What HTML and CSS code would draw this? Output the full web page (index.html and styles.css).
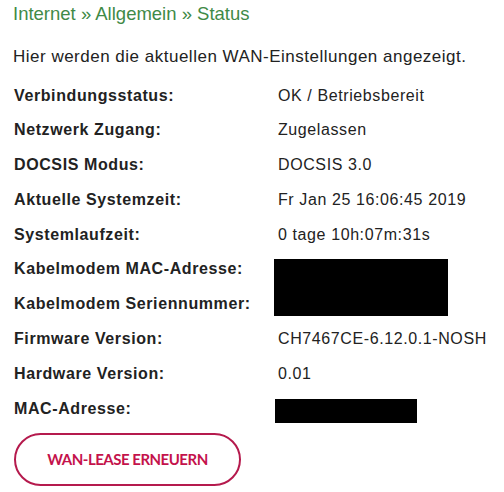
FILE: index.html
```html
<!DOCTYPE html>
<html lang="de">
<head>
<meta charset="utf-8">
<title>Status</title>
<link rel="stylesheet" href="styles.css">
</head>
<body>
<main class="page">
  <h1 class="crumbs">Internet » Allgemein » Status</h1>
  <p class="intro">Hier werden die aktuellen WAN-Einstellungen angezeigt.</p>
  <dl class="status">
    <dt>Verbindungsstatus:</dt><dd>OK / Betriebsbereit</dd>
    <dt>Netzwerk Zugang:</dt><dd>Zugelassen</dd>
    <dt>DOCSIS Modus:</dt><dd>DOCSIS 3.0</dd>
    <dt>Aktuelle Systemzeit:</dt><dd>Fr Jan 25 16:06:45 2019</dd>
    <dt>Systemlaufzeit:</dt><dd>0 tage 10h:07m:31s</dd>
    <dt>Kabelmodem MAC-Adresse:</dt><dd class="redacted redacted-tall"><span class="bar"></span></dd>
    <dt>Kabelmodem Seriennummer:</dt>
    <dt>Firmware Version:</dt><dd>CH7467CE-6.12.0.1-NOSH</dd>
    <dt>Hardware Version:</dt><dd>0.01</dd>
    <dt>MAC-Adresse:</dt><dd class="redacted redacted-short"><span class="bar"></span></dd>
  </dl>
  <button class="btn" type="button">WAN-LEASE ERNEUERN</button>
</main>
</body>
</html>
```
FILE: styles.css
```css
html, body {
  margin: 0;
  padding: 0;
  background: #ffffff;
}
.page {
  padding: 2px 0 0 13px;
  font-family: "Liberation Sans", Arial, sans-serif;
  color: #222222;
}
.crumbs {
  margin: 0;
  font-size: 18.5px;
  line-height: 24px;
  font-weight: normal;
  color: #3f8a47;
}
.intro {
  margin: 21px 0 0 0;
  font-size: 17px;
  line-height: 20px;
  letter-spacing: 0.5px;
}
.status {
  margin: 11.5px 0 0 1px;
  display: grid;
  grid-template-columns: 264px 1fr;
  grid-auto-rows: 34.8px;
  font-size: 16px;
  line-height: 34.8px;
  letter-spacing: 0.6px;
}
.status dt {
  grid-column: 1;
  font-weight: bold;
}
.status dd {
  grid-column: 2;
  margin: 0;
}
.redacted {
  display: flex;
  align-items: flex-start;
}
.redacted-tall {
  grid-row: span 2;
}
.bar {
  display: block;
  background: #000000;
  margin-left: -4px;
}
.redacted-tall .bar {
  width: 174px;
  height: 57px;
  margin-top: 6.5px;
}
.redacted-short .bar {
  width: 142px;
  height: 24px;
  margin-top: 7.5px;
  margin-left: -3px;
}
.btn {
  display: block;
  margin: 6.5px 0 0 1px;
  width: 227px;
  height: 53px;
  border: 2px solid #b51a4d;
  border-radius: 27px;
  background: #ffffff;
  color: #c4124b;
  font-family: Lato, "Liberation Sans", sans-serif;
  font-weight: bold;
  font-size: 15px;
  letter-spacing: -0.5px;
  padding: 0;
}
```
